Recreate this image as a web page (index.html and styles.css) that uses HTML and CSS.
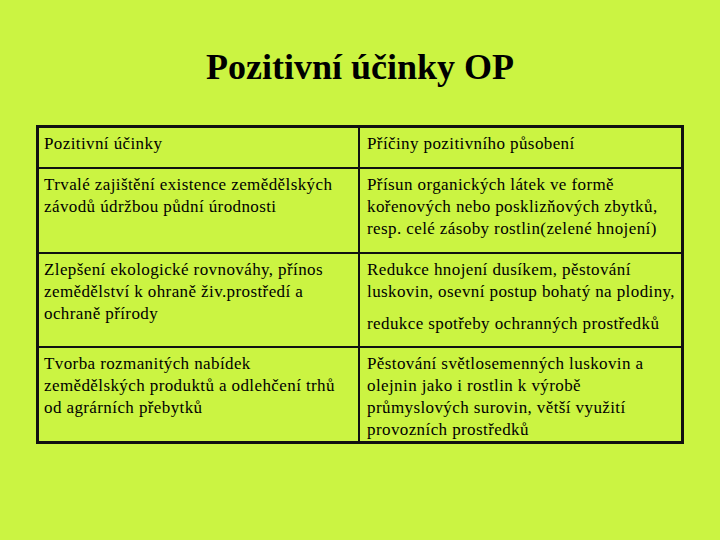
FILE: index.html
```html
<!DOCTYPE html>
<html lang="cs">
<head>
<meta charset="utf-8">
<title>Pozitivní účinky OP</title>
<link rel="stylesheet" href="styles.css">
</head>
<body>
<div class="slide">
  <h1 class="title">Pozitivní účinky OP</h1>
  <table class="grid">
    <tr class="r1">
      <td class="c1">Pozitivní účinky</td>
      <td class="c2">Příčiny pozitivního působení</td>
    </tr>
    <tr class="r2">
      <td class="c1">Trvalé zajištění existence zemědělských<br>závodů údržbou půdní úrodnosti</td>
      <td class="c2">Přísun organických látek ve formě<br>kořenových nebo posklizňových zbytků,<br>resp. celé zásoby rostlin(zelené hnojení)</td>
    </tr>
    <tr class="r3">
      <td class="c1">Zlepšení ekologické rovnováhy, přínos<br>zemědělství k ohraně živ.prostředí a<br>ochraně přírody</td>
      <td class="c2"><p class="par">Redukce hnojení dusíkem, pěstování<br>luskovin, osevní postup bohatý na plodiny,</p><p class="par gap">redukce spotřeby ochranných prostředků</p></td>
    </tr>
    <tr class="r4">
      <td class="c1">Tvorba rozmanitých nabídek<br>zemědělských produktů a odlehčení trhů<br>od agrárních přebytků</td>
      <td class="c2">Pěstování světlosemenných luskovin a<br>olejnin jako i rostlin k výrobě<br>průmyslových surovin, větší využití<br>provozních prostředků</td>
    </tr>
  </table>
</div>
</body>
</html>
```
FILE: styles.css
```css
html, body {
  margin: 0;
  padding: 0;
  background: #cbf442;
}
.slide {
  width: 720px;
  height: 540px;
  padding-top: 46px;
  box-sizing: border-box;
  font-family: "Liberation Serif", "Times New Roman", serif;
  color: #000;
}
.title {
  margin: 0 0 37px 0;
  text-align: center;
  font-size: 36px;
  font-weight: bold;
  line-height: 42px;
}
.grid {
  margin-left: 36px;
  width: 648px;
  border-collapse: collapse;
  border: 3px solid #111;
  table-layout: fixed;
}
.grid td {
  border: 2px solid #111;
  vertical-align: top;
  padding: 5px 0 0 7px;
  font-size: 17px;
  letter-spacing: 0.4px;
  line-height: 22px;
  width: 50%;
  white-space: nowrap;
}
.grid td.c1 { padding-left: 5px; }
.r1 { height: 41px; }
.r2 { height: 85px; }
.r3 { height: 94px; }
.r4 { height: 94px; }
.par { margin: 0; }
.gap { margin-top: 10px; }
```
